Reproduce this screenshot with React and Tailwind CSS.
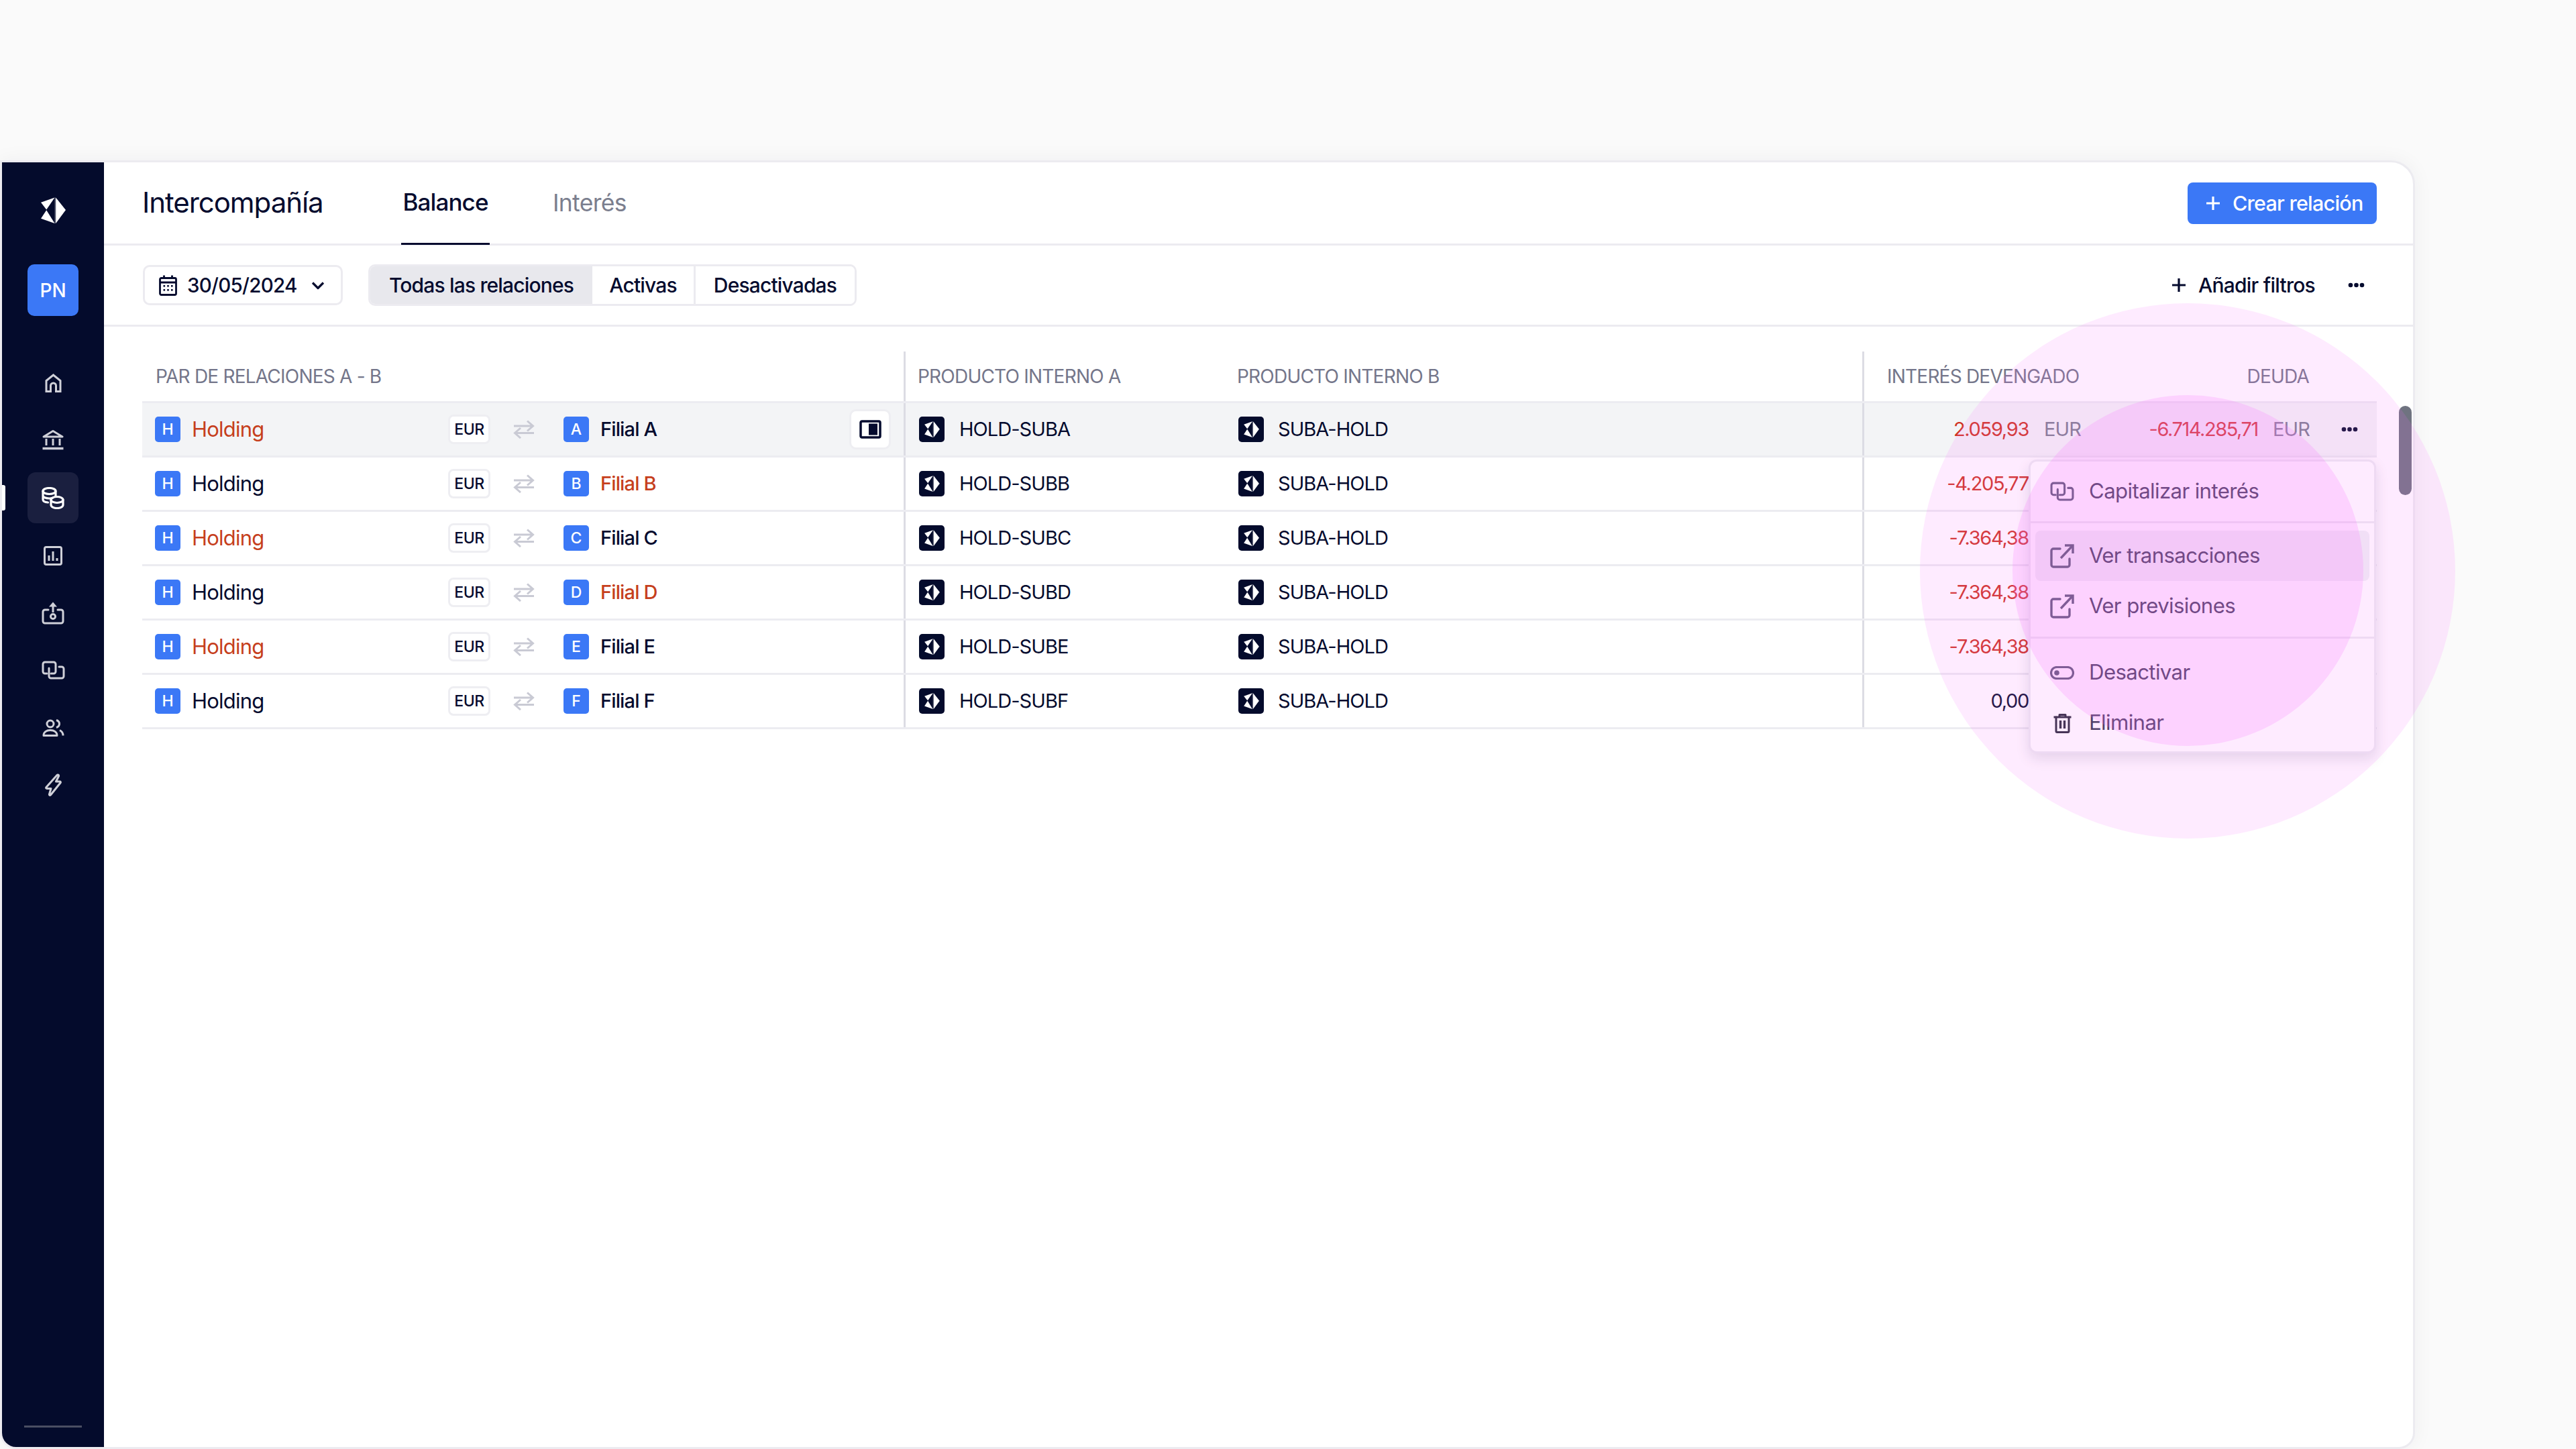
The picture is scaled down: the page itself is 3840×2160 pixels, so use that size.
import React from "react";

const INK = "#050b2e";

function Logo({ className, fill = "#fff" }) {
  return (
    <svg viewBox="0 0 36 38" className={className}>
      <path d="M21.6 0.5 36 18.5 21.6 38Z" fill={fill} />
      <path d="M0 7.5 20 0.5 8 18Z" fill={fill} />
      <path d="M0 31 8 18.8 20 38Z" fill={fill} />
      <path d="M20.6 0.5V38" stroke={fill} strokeWidth="0.8" opacity="0.6" />
    </svg>
  );
}

function Stroke({ w, h, className, sw = 3, children }) {
  return (
    <svg width={w} height={h} viewBox={`0 0 ${w} ${h}`} fill="none" stroke="currentColor" strokeWidth={sw} strokeLinecap="round" strokeLinejoin="round" className={className}>
      {children}
    </svg>
  );
}

const HomeIcon = () => (
  <Stroke w={25} h={28} sw={3}>
    <path strokeLinecap="butt" strokeLinejoin="miter" d="M2 26.5V10.5L12.5 2 23 10.5V26.5H16.5V18a4 4 0 0 0-8 0V26.5Z" />
  </Stroke>
);
const BankIcon = () => (
  <Stroke w={32} h={31} sw={3} className="-mt-[3px]">
    <path strokeLinecap="butt" d="M2 11 16 2.5 30 11Z" />
    <path strokeLinecap="butt" d="M6 14V24M16 14V24M26 14V24" />
    <path strokeLinecap="butt" strokeWidth="3.5" d="M0.5 28.5H31.5" />
  </Stroke>
);
const CoinsIcon = () => (
  <Stroke w={34} h={33} sw={3.2}>
    <ellipse cx="11.5" cy="6" rx="9.5" ry="4.5" />
    <path d="M2 6V18.5C2 21 5 22.8 9.5 23M2 12.5C2 15 6 17 11.5 17c2 0 3.5-.2 5-.7M21 6V13" />
    <ellipse cx="23" cy="19" rx="9" ry="4.5" />
    <path d="M14 19V26.5C14 29.5 18 31.5 23 31.5S32 29.5 32 26.5V19" />
  </Stroke>
);
const ChartIcon = () => (
  <Stroke w={28} h={29} sw={3}>
    <rect x="1.5" y="1.5" width="25" height="26" rx="2.5" />
    <path strokeLinecap="butt" d="M8 22V14M14 22V8M20 22V18" />
  </Stroke>
);
const UploadIcon = () => (
  <Stroke w={34} h={34} sw={3}>
    <path d="M10 12H5a3 3 0 0 0-3 3V29a3 3 0 0 0 3 3H29a3 3 0 0 0 3-3V15a3 3 0 0 0-3-3H24" />
    <circle cx="17" cy="22" r="3.5" />
    <path strokeLinecap="butt" d="M17 16V4" />
    <path fill="currentColor" stroke="none" d="M17 0.5 23 7.5H11Z" />
  </Stroke>
);
const CopyIcon = ({ w = 35, h = 28 }) => (
  <Stroke w={w} h={h} sw={3}>
    <g transform={`scale(${w / 35} ${h / 28})`}>
      <path d="M8 19H5a3 3 0 0 1-3-3V5a3 3 0 0 1 3-3H18a3 3 0 0 1 3 3V16a3 3 0 0 1-3 3H14" />
      <path d="M11 19V11M26 9H30a3 3 0 0 1 3 3V23a3 3 0 0 1-3 3H14a3 3 0 0 1-3-3V19" />
    </g>
  </Stroke>
);
const UsersIcon = () => (
  <Stroke w={33} h={26} sw={3}>
    <circle cx="12" cy="7" r="5" />
    <path strokeLinecap="butt" d="M2 24.5c0-5 4-8 10-8s10 3 10 8Z" />
    <path strokeLinecap="butt" d="M21 1.5c3 1 4.5 3 4.5 5.5S24 11.5 21 12.5" />
    <path strokeLinecap="butt" d="M26 16.5c3 1.5 5 4 5 8" />
  </Stroke>
);
const BoltIcon = () => (
  <Stroke w={27} h={35} sw={3}>
    <path d="M19 2.5 3 20.5c-.8 1-.3 2 1 2H10L7.500 31c-.3 1.500 1 2 2 1L24 14c.8-1 .3-2-1-2H17.500L21.500 4c.5-1.800-1.500-2.500-2.500-1.500Z" />
  </Stroke>
);
const ExternalIcon = () => (
  <Stroke w={36} h={36} sw={3.4}>
    <path d="M15 7H5a3 3 0 0 0-3 3V31a3 3 0 0 0 3 3H26a3 3 0 0 0 3-3V22" />
    <path strokeLinecap="butt" d="M16 21 33 3" />
    <path strokeLinecap="butt" strokeLinejoin="miter" d="M22 2H34V14" />
  </Stroke>
);
const ToggleIcon = () => (
  <Stroke w={36} h={20} sw={3.2}>
    <rect x="1.5" y="1.5" width="33" height="17" rx="8.5" />
    <circle cx="10" cy="10" r="3.800" fill="currentColor" stroke="none" />
  </Stroke>
);
const TrashIcon = () => (
  <Stroke w={27} h={30} sw={3}>
    <path strokeLinecap="butt" d="M0.500 6H26.500M9 6V2.500H18V6" />
    <path strokeLinejoin="round" d="M4 6V27a1.500 1.500 0 0 0 1.500 1.500H21.500A1.500 1.500 0 0 0 23 27V6" />
    <path strokeLinecap="butt" strokeWidth="3.400" d="M10.500 11V23M16.500 11V23" />
  </Stroke>
);
const Dots = ({ className = "" }) => (
  <svg width="25" height="8" viewBox="0 0 25 8" fill="currentColor" className={className}>
    <circle cx="4" cy="4" r="3.300" />
    <circle cx="12.500" cy="4" r="3.300" />
    <circle cx="21" cy="4" r="3.300" />
  </svg>
);
const Plus = () => (
  <Stroke w={20} h={22} sw={3.2}>
    <path strokeLinecap="butt" d="M10 1V21M0 11H20" />
  </Stroke>
);
const Calendar = () => (
  <Stroke w={27} h={31} sw={2.800}>
    <rect x="1.500" y="4.500" width="24" height="25" rx="2" />
    <path strokeLinecap="butt" d="M1.500 11H25.500M7.500 0.500V5M19.500 0.500V5" />
    <g fill="currentColor" stroke="none">
      <rect x="6.500" y="15" width="2.600" height="2.600" />
      <rect x="12.200" y="15" width="2.600" height="2.600" />
      <rect x="18" y="15" width="2.600" height="2.600" />
      <rect x="6.500" y="21" width="2.600" height="2.600" />
      <rect x="12.200" y="21" width="2.600" height="2.600" />
      <rect x="18" y="21" width="2.600" height="2.600" />
    </g>
  </Stroke>
);
const Chevron = () => (
  <Stroke w={20} h={13} sw={3.200}>
    <path strokeLinecap="butt" d="M2 2.500 10 10.500 18 2.500" />
  </Stroke>
);
const Swap = () => (
  <Stroke w={32} h={28} sw={3}>
    <path strokeLinecap="butt" strokeLinejoin="miter" d="M1 9H29M21 1.500 29.500 9 21 16.500M31 19.500H3M11 12 2.500 19.500 11 27" />
  </Stroke>
);
const PanelIcon = () => (
  <svg width="33" height="28" viewBox="0 0 33 28">
    <rect x="2" y="2" width="29" height="24" rx="2" fill="none" stroke={INK} strokeWidth="3.500" />
    <rect x="14" y="5.500" width="13" height="17" fill={INK} />
  </svg>
);

const nav = [
  { icon: <HomeIcon /> },
  { icon: <BankIcon /> },
  { icon: <CoinsIcon />, active: true },
  { icon: <ChartIcon /> },
  { icon: <UploadIcon /> },
  { icon: <CopyIcon /> },
  { icon: <UsersIcon /> },
  { icon: <BoltIcon /> },
];

function Sidebar() {
  return (
    <aside className="relative flex h-full w-[152px] shrink-0 flex-col items-center bg-[#040b2c]">
      <div className="flex h-[142px] shrink-0 items-center justify-center">
        <Logo className="h-[39px] w-[37px]" />
      </div>
      <div className="mt-[10px] flex h-[77px] w-[76px] shrink-0 items-center justify-center rounded-[10px] bg-[#3b78f6] text-[28px] font-medium text-white">
        PN
      </div>
      <nav className="mt-[62px] flex flex-col items-center">
        {nav.map((n, i) => (
          <div
            key={i}
            className={`flex h-[76px] w-[76px] items-center justify-center rounded-[12px] ${i ? "mt-[9.7px]" : ""} ${n.active ? "bg-[#1a1f3f] text-white" : "text-[#cfd0d8]"}`}
          >
            {n.icon}
          </div>
        ))}
      </nav>
      <div className="absolute left-0 top-[481px] h-[38px] w-[5px] rounded-r-[3px] bg-white" />
      <div className="mt-auto mb-[29px] h-[3px] w-[86px] bg-[#4a4e63]" />
    </aside>
  );
}

const Badge = ({ c }) => (
  <div className="flex h-[38px] w-[38px] shrink-0 items-center justify-center rounded-[5px] bg-[#3b78f6] text-[23px] font-medium text-white">
    {c}
  </div>
);
const ProdIcon = () => (
  <div className="flex h-[38px] w-[38px] shrink-0 items-center justify-center rounded-[5px] bg-[#040b2c]">
    <Logo className="h-[24px] w-[23px]" />
  </div>
);

const rows = [
  { hRed: true, c: "A", name: "Filial A", a: "HOLD-SUBA", v: "2.059,93", red: true, sel: true },
  { c: "B", name: "Filial B", fRed: true, a: "HOLD-SUBB", v: "-4.205,77", red: true },
  { hRed: true, c: "C", name: "Filial C", a: "HOLD-SUBC", v: "-7.364,38", red: true },
  { c: "D", name: "Filial D", fRed: true, a: "HOLD-SUBD", v: "-7.364,38", red: true },
  { hRed: true, c: "E", name: "Filial E", a: "HOLD-SUBE", v: "-7.364,38", red: true },
  { c: "F", name: "Filial F", a: "HOLD-SUBF", v: "0,00" },
];

const headCls = "text-[28px] tracking-[-0.028em] text-[#74768a]";
const cellCls = "text-[29px] tracking-[-0.033em]";

function Row({ r }) {
  return (
    <div className={`flex h-[81px] items-stretch border-b-[3px] border-[#ececf1] ${r.sel ? "bg-[#f3f4f6]" : ""}`}>
      <div className="flex w-[1138px] shrink-0 items-center border-r-[3px] border-[#dcdce4] pl-[19px]">
        <div className="flex w-[437px] shrink-0 items-center gap-[17px]">
          <Badge c="H" />
          <span className={`text-[31px] tracking-[-0.025em] ${r.hRed ? "text-[#c63f1d]" : "text-[#050b2e]"}`}>Holding</span>
        </div>
        <div className="flex h-[44px] w-[63px] shrink-0 items-center justify-center rounded-[8px] border-[3px] border-[#eeeef2] bg-white text-[23px] font-medium tracking-[-0.02em] text-[#050b2e]">
          EUR
        </div>
        <div className="ml-[34px] mr-[43px] shrink-0 text-[#c9cad4]">
          <Swap />
        </div>
        <div className="flex items-center gap-[17px]">
          <Badge c={r.c} />
          <span className={`text-[29px] font-medium tracking-[-0.03em] ${r.fRed ? "text-[#c63f1d]" : "text-[#050b2e]"}`}>{r.name}</span>
        </div>
        {r.sel && (
          <div className="ml-auto mr-[19px] flex h-[60px] w-[62px] items-center justify-center rounded-[10px] border-[3px] border-[#eeeef2] bg-white">
            <PanelIcon />
          </div>
        )}
      </div>
      <div className="flex w-[1429px] shrink-0 items-center border-r-[3px] border-[#dcdce4] pl-[20px] text-[#050b2e]">
        <div className={`flex w-[476px] shrink-0 items-center gap-[22px] ${cellCls}`}>
          <ProdIcon />
          <span>{r.a}</span>
        </div>
        <div className={`flex items-center gap-[21px] ${cellCls}`}>
          <ProdIcon />
          <span>SUBA-HOLD</span>
        </div>
      </div>
      <div className="flex flex-1 items-center text-[29px]">
        <span className={`w-[245px] shrink-0 text-right tracking-[-0.045em] ${r.red ? "text-[#cf3322]" : "text-[#050b2e]"}`}>{r.v}</span>
        {r.sel && (
          <>
            <span className="ml-[23px] tracking-[-0.03em] text-[#7b7e8e]">EUR</span>
            <span className="ml-auto tracking-[-0.05em] text-[#cf3322]">-6.714.285,71</span>
            <span className="ml-[22px] tracking-[-0.03em] text-[#7b7e8e]">EUR</span>
            <Dots className="ml-[47px] mr-[28px] text-[#050b2e]" />
          </>
        )}
      </div>
    </div>
  );
}

const items = [
  [{ icon: <CopyIcon w={36} h={29} />, t: "Capitalizar interés" }],
  [
    { icon: <ExternalIcon />, t: "Ver transacciones", hover: true },
    { icon: <ExternalIcon />, t: "Ver previsiones" },
  ],
  [
    { icon: <ToggleIcon />, t: "Desactivar" },
    { icon: <TrashIcon />, t: "Eliminar", dark: true },
  ],
];

function MenuItem({ it }) {
  return (
    <div className={`flex h-[75px] items-center gap-[22px] rounded-[8px] px-[22px] ${it.hover ? "bg-[#f0f1f4]" : ""}`}>
      <div className={`flex w-[36px] shrink-0 justify-center ${it.dark ? "text-[#2a2a3c]" : "text-[#475467]"}`}>{it.icon}</div>
      <span className="text-[31.2px] tracking-[-0.02em] text-[#34384f]">{it.t}</span>
    </div>
  );
}

function Menu() {
  return (
    <div className="absolute left-[3024px] top-[685px] w-[518px] overflow-hidden rounded-[12px] border-[3px] border-[#ececf1] bg-white shadow-[0_8px_20px_rgba(20,20,60,0.12)]">
      <div className="flex h-[92px] flex-col justify-center border-b-[3px] border-[#ececf1] px-[7px]">
        <MenuItem it={items[0][0]} />
      </div>
      <div className="flex flex-col border-b-[3px] border-[#ececf1] px-[7px] pb-[8px] pt-[11px]">
        <MenuItem it={items[1][0]} />
        <MenuItem it={items[1][1]} />
      </div>
      <div className="flex flex-col px-[7px] pb-[5px] pt-[13px]">
        <MenuItem it={items[2][0]} />
        <MenuItem it={items[2][1]} />
      </div>
    </div>
  );
}

export default function App() {
  return (
    <div className="relative h-[2160px] w-[3840px] overflow-hidden bg-[#fafafa] pt-[239px] font-[Inter,sans-serif] text-[#050b2e]">
      <div className="flex h-[1921px] w-[3600px] overflow-hidden rounded-tr-[36px] rounded-br-[24px] rounded-bl-[24px] border-[3px] border-[#ecebf0] bg-white shadow-[0_0_30px_rgba(20,20,60,0.05)]">
        <Sidebar />
        <main className="flex min-w-0 flex-1 flex-col">
          <header className="flex h-[124px] shrink-0 items-center border-b-[3px] border-[#ecebf0] pl-[57px] pr-[54px]">
            <h1 className="-mt-[2px] w-[386px] shrink-0 text-[42px] font-normal tracking-[-0.025em]">Intercompañía</h1>
            <div className="flex h-[124px] w-[132px] shrink-0 items-center justify-center border-b-[3px] border-[#050b2e] text-[35px] font-medium tracking-[-0.025em]">
              Balance
            </div>
            <div className="ml-[94px] text-[35.5px] tracking-[-0.02em] text-[#7b7e8e]">Interés</div>
            <button className="ml-auto flex h-[62px] w-[282px] items-center gap-[19px] rounded-[8px] bg-[#3b78f6] pl-[28px] text-[30.5px] font-medium tracking-[-0.025em] text-white">
              <Plus />
              Crear relación
            </button>
          </header>
          <div className="flex h-[121px] shrink-0 items-center border-b-[3px] border-[#ecebf0] pl-[58px] pr-[72px]">
            <button className="flex h-[60px] w-[298px] shrink-0 items-center gap-[15px] rounded-[10px] border-[3px] border-[#ecebf0] bg-white pl-[21px] text-[29.5px] font-medium tracking-[-0.025em]">
              <Calendar />
              <span>30/05/2024</span>
              <span className="ml-[6px]"><Chevron /></span>
            </button>
            <div className="ml-[38px] flex h-[62px] shrink-0 overflow-hidden rounded-[10px] border-[3px] border-[#ecebf0] text-[30px] font-medium tracking-[-0.028em]">
              <div className="flex w-[331px] items-center justify-center bg-[#e8e8ed]">Todas las relaciones</div>
              <div className="flex w-[154px] items-center justify-center border-r-[3px] border-[#ecebf0] bg-white">Activas</div>
              <div className="flex w-[237px] items-center justify-center bg-white">Desactivadas</div>
            </div>
            <button className="ml-auto flex items-center gap-[19px] text-[30px] font-medium tracking-[-0.025em]">
              <Plus />
              Añadir filtros
            </button>
            <Dots className="ml-[49px]" />
          </div>
          <section className="ml-[57px] w-[3331px] pt-[37px]">
            <div className="flex h-[77px] items-stretch border-b-[3px] border-[#ececf1]">
              <div className={`flex w-[1138px] shrink-0 items-center border-r-[3px] border-[#dcdce4] pl-[20px] ${headCls}`}>PAR DE RELACIONES A - B</div>
              <div className={`flex w-[1429px] shrink-0 items-center border-r-[3px] border-[#dcdce4] pl-[18px] ${headCls}`}>
                <span className="w-[476px] shrink-0">PRODUCTO INTERNO A</span>
                <span>PRODUCTO INTERNO B</span>
              </div>
              <div className={`flex flex-1 items-center pl-[34px] pr-[101px] ${headCls}`}>
                <span>INTERÉS DEVENGADO</span>
                <span className="ml-auto">DEUDA</span>
              </div>
            </div>
            {rows.map((r) => <Row key={r.c} r={r} />)}
          </section>
        </main>
      </div>

      <div className="absolute left-[3576px] top-[605px] h-[133px] w-[19px] rounded-full bg-[#6f7380]" />
      <Menu />
      <div className="pointer-events-none absolute left-[2862px] top-[452px] h-[798px] w-[798px] rounded-full bg-[#fa6eff]/14" />
      <div className="pointer-events-none absolute left-[3000px] top-[589px] h-[523px] w-[523px] rounded-full bg-[#fa6eff]/20" />
    </div>
  );
}
